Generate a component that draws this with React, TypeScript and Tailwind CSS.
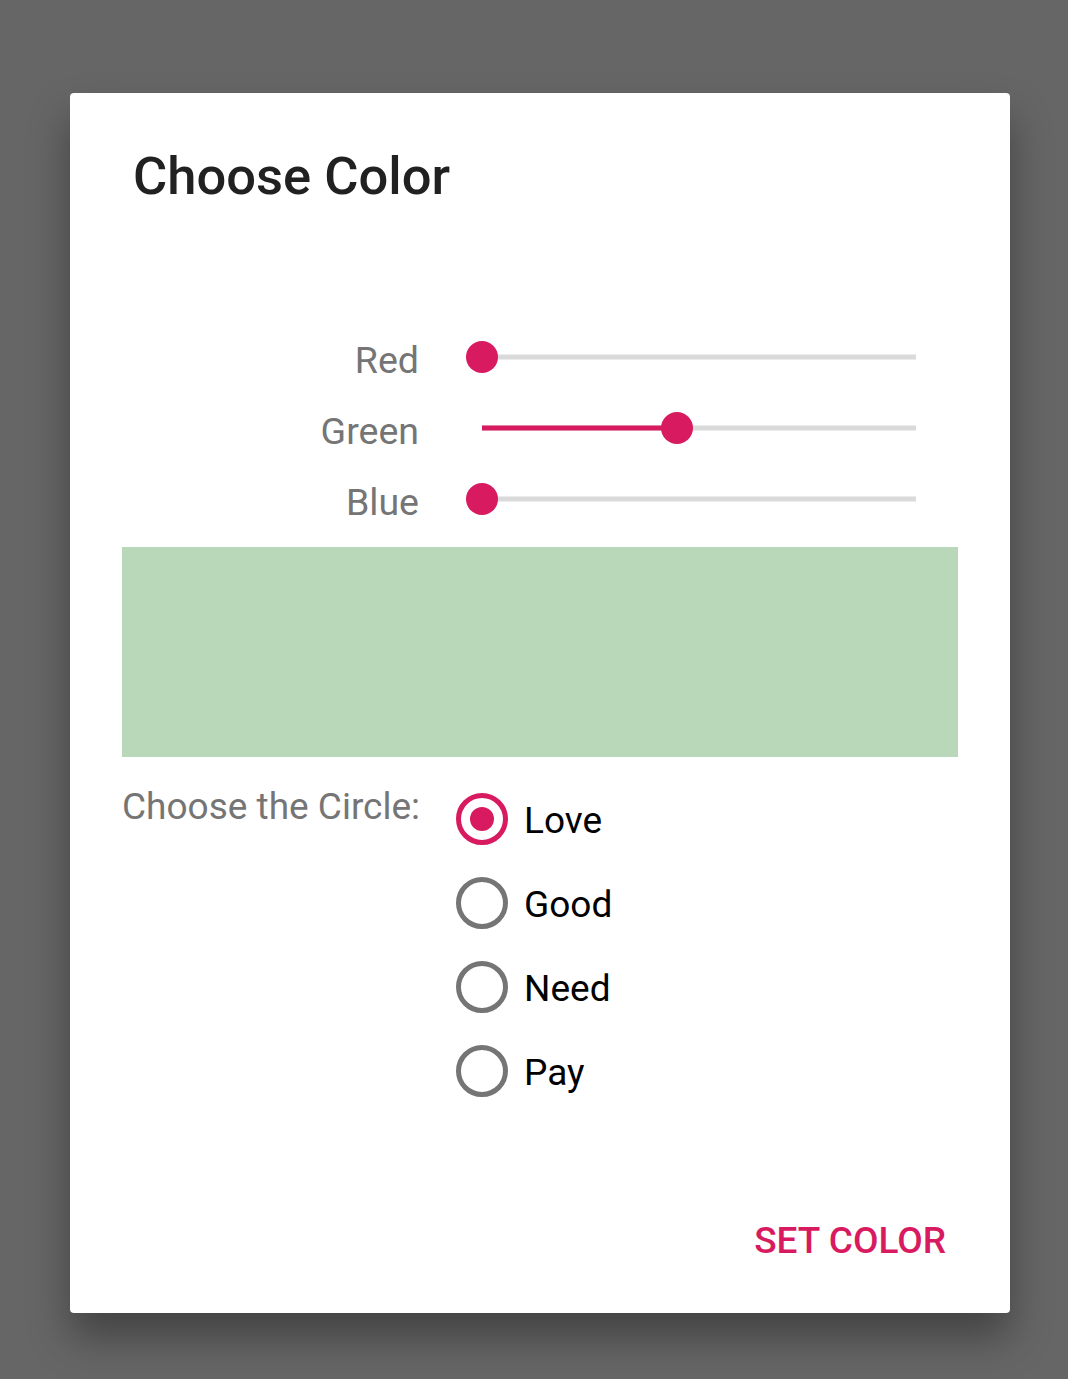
import React, { useState } from 'react';

function Slider({ value }: { value: number }) {
  // value 0..1, thumb travels along the inset track
  return (
    <div className="relative h-[71px] w-[466px]">
      <div className="absolute left-4 right-4 top-1/2 h-[5px] -translate-y-1/2 bg-[#dadada]" />
      <div
        className="absolute left-4 top-1/2 h-[5px] -translate-y-1/2 bg-[#d81b60]"
        style={{ width: `${value * 434}px` }}
      />
      <div
        className="absolute top-1/2 h-[32px] w-[32px] -translate-y-1/2 rounded-full bg-[#d81b60]"
        style={{ left: `${value * 434}px` }}
      />
    </div>
  );
}

function Radio({ label, checked, onClick }: { label: string; checked: boolean; onClick: () => void }) {
  return (
    <button onClick={onClick} className="flex h-[84px] items-center gap-[16px] cursor-pointer">
      <span
        className={
          checked
            ? 'flex h-[52px] w-[52px] items-center justify-center rounded-full border-[5px] border-[#d81b60]'
            : 'flex h-[52px] w-[52px] items-center justify-center rounded-full border-[5px] border-[#757575]'
        }
      >
        {checked && <span className="h-[24px] w-[24px] rounded-full bg-[#d81b60]" />}
      </span>
      <span className="pt-[3px] text-[37px] leading-none text-black">{label}</span>
    </button>
  );
}

export default function App() {
  const [choice, setChoice] = useState('Love');
  const sliders = [
    { name: 'Red', value: 0 },
    { name: 'Green', value: 0.449 },
    { name: 'Blue', value: 0 },
  ];

  return (
    <div className="min-h-[1379px] bg-[#666666] pt-[93px] font-['Roboto',sans-serif]">
      <div className="ml-[70px] flex h-[1220px] w-[940px] flex-col rounded-[4px] bg-white shadow-[0_24px_40px_rgba(0,0,0,0.35)]">
        {/* Title */}
        <h1 className="pl-[63px] pt-[53px] text-[52.5px] font-medium leading-[60px] text-[#212121]">Choose Color</h1>

        {/* Sliders */}
        <div className="mt-[115px] px-[52px]">
          {sliders.map((s) => (
            <div key={s.name} className="flex items-center">
              <span className="w-[297px] pt-[9px] text-right text-[37.5px] leading-none text-[#757575]">{s.name}</span>
              <div className="ml-[47px]">
                <Slider value={s.value} />
              </div>
            </div>
          ))}

          {/* Preview */}
          <div className="mt-[13px] h-[210px] w-full bg-[#b9d8b9]" />

          {/* Circle options */}
          <div className="mt-[20px] flex">
            <span className="w-[334px] pt-[8px] text-[37px] leading-[43px] text-[#757575]">Choose the Circle:</span>
            <div className="flex flex-col">
              {['Love', 'Good', 'Need', 'Pay'].map((o) => (
                <Radio key={o} label={o} checked={choice === o} onClick={() => setChoice(o)} />
              ))}
            </div>
          </div>
        </div>

        {/* Action */}
        <div className="mt-auto flex justify-end pb-[51px] pr-[64px]">
          <button className="text-[37px] font-medium leading-[43px] text-[#d81b60]">SET COLOR</button>
        </div>
      </div>
    </div>
  );
}
